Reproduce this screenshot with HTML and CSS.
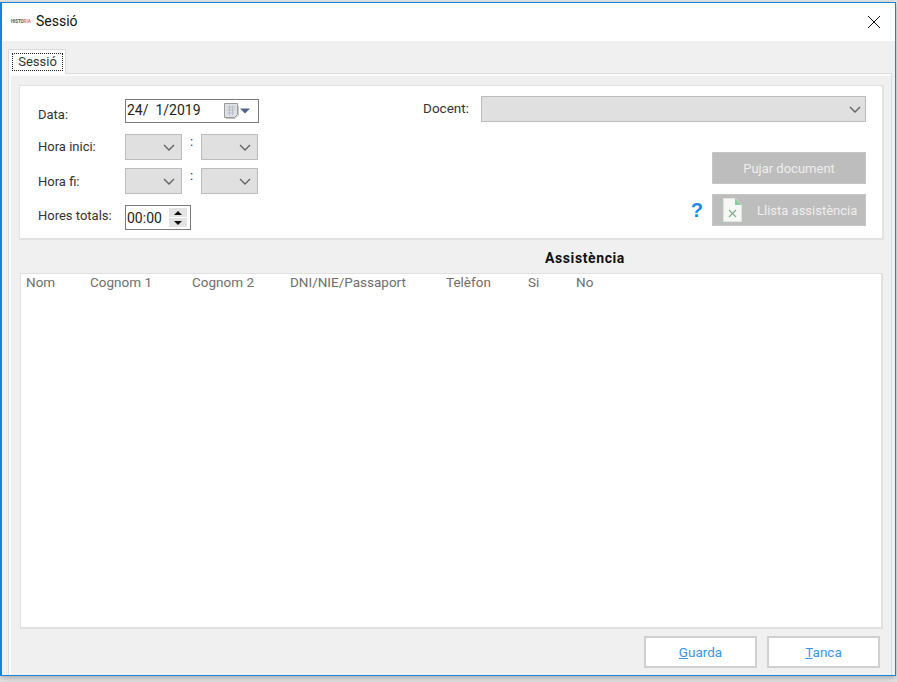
FILE: index.html
```html
<!DOCTYPE html>
<html lang="ca">
<head>
<meta charset="utf-8">
<title>Sessió</title>
<link rel="stylesheet" href="styles.css">
</head>
<body>
<div class="window">
  <header class="titlebar">
    <span class="logo"><span class="logo-dark">HISTO</span><span class="logo-red">RIA</span></span>
    <span class="title">Sessió</span>
    <svg class="close" width="14" height="14" viewBox="0 0 14 14"><path d="M1 1L13 13M13 1L1 13" stroke="#111" stroke-width="1" fill="none"/></svg>
  </header>
  <main class="content">
    <div class="tabs"><div class="tab"><span class="tab-focus">Sessió</span></div></div>
    <div class="tabpage">
      <section class="panel">
        <div class="left">
          <div class="row row-date">
            <label class="lbl lbl-date">Data:</label>
            <div class="date">
              <span class="date-text">24/&nbsp; 1/2019</span>
              <svg class="cal" width="15" height="16" viewBox="0 0 15 16">
                <path d="M0.5 0.5H13.5V11.5L10.5 14.5H0.5Z" fill="#dde0e6" stroke="#9a9a9a"/>
                <path d="M3 4H11M3 7H11M3 10H10M5.5 2.5V12.5M8.5 2.5V12.5" stroke="#b9bdc6" fill="none"/>
                <path d="M14.5 3V12L11 15.5H2" stroke="#c4c4c4" fill="none"/>
              </svg>
              <svg class="dd" width="10" height="6" viewBox="0 0 10 6"><path d="M0 0.5H10L5 5.5Z" fill="#4f6484"/></svg>
            </div>
          </div>
          <div class="row row-start">
            <label class="lbl lbl-start">Hora inici:</label>
            <div class="combo combo-s"><svg class="chev" width="12" height="7" viewBox="0 0 12 7"><path d="M1 1L6 6L11 1" stroke="#606060" stroke-width="1.3" fill="none"/></svg></div>
            <span class="colon">:</span>
            <div class="combo combo-s"><svg class="chev" width="12" height="7" viewBox="0 0 12 7"><path d="M1 1L6 6L11 1" stroke="#606060" stroke-width="1.3" fill="none"/></svg></div>
          </div>
          <div class="row row-end">
            <label class="lbl">Hora fi:</label>
            <div class="combo combo-s"><svg class="chev" width="12" height="7" viewBox="0 0 12 7"><path d="M1 1L6 6L11 1" stroke="#606060" stroke-width="1.3" fill="none"/></svg></div>
            <span class="colon">:</span>
            <div class="combo combo-s"><svg class="chev" width="12" height="7" viewBox="0 0 12 7"><path d="M1 1L6 6L11 1" stroke="#606060" stroke-width="1.3" fill="none"/></svg></div>
          </div>
          <div class="row row-total">
            <label class="lbl lbl-total">Hores totals:</label>
            <div class="spin">
              <span class="spin-text">00:00</span>
              <div class="spin-btns">
                <span class="spin-btn"><svg width="8" height="4" viewBox="0 0 8 4"><path d="M4 0L8 4H0Z" fill="#111"/></svg></span>
                <span class="spin-btn"><svg width="8" height="4" viewBox="0 0 8 4"><path d="M0 0H8L4 4Z" fill="#111"/></svg></span>
              </div>
            </div>
          </div>
        </div>
        <div class="right">
          <div class="docent">
            <label class="lbl-docent">Docent:</label>
            <div class="combo combo-l"><svg class="chev" width="12" height="7" viewBox="0 0 12 7"><path d="M1 1L6 6L11 1" stroke="#606060" stroke-width="1.3" fill="none"/></svg></div>
          </div>
          <div class="btn-dis btn-upload">Pujar document</div>
          <div class="list-row">
            <span class="help">?</span>
            <div class="btn-dis btn-list">
              <svg class="xls" width="19" height="24" viewBox="0 0 19 24">
                <path d="M0.5 0.5H12L18.5 7V23.5H0.5Z" fill="#f6f8f6" stroke="#dfe6df"/>
                <path d="M12 0.5L18.5 7H12Z" fill="#8fcb9b"/>
                <path d="M6 12L13 19M13 12L6 19" stroke="#7fae8d" stroke-width="1.2" fill="none"/>
              </svg>
              <span>Llista assistència</span>
            </div>
          </div>
        </div>
      </section>
      <h2 class="heading">Assistència</h2>
      <section class="list">
        <div class="cols">
          <span>Nom</span>
          <span>Cognom 1</span>
          <span>Cognom 2</span>
          <span>DNI/NIE/Passaport</span>
          <span>Telèfon</span>
          <span>Si</span>
          <span>No</span>
        </div>
      </section>
      <footer class="actions">
        <button class="btn"><u>G</u>uarda</button>
        <button class="btn"><u>T</u>anca</button>
      </footer>
    </div>
  </main>
</div>
</body>
</html>
```
FILE: styles.css
```css
* { box-sizing: border-box; }
html, body { margin: 0; padding: 0; }
body {
  width: 897px;
  height: 682px;
  overflow: hidden;
  background: #e9e9e9;
  font-family: Roboto, "Liberation Sans", sans-serif;
  font-size: 13px;
  color: #333;
}
.window {
  margin-top: 2px;
  width: 896px;
  height: 674px;
  border: 1px solid #1883d7;
  border-left-width: 2px;
  display: flex;
  flex-direction: column;
  box-shadow: 0 2px 7px rgba(0, 0, 0, .3);
  background: #f0f0f0;
}
.titlebar {
  height: 38px;
  flex: none;
  background: #fff;
  display: flex;
  align-items: center;
  padding: 0 14px 2px 9px;
}
.logo { font-size: 4.5px; font-weight: 700; width: 25px; letter-spacing: -.1px; }
.logo-dark { color: #555; }
.logo-red { color: #d9727c; }
.title { font-size: 14px; color: #111; }
.close { margin-left: auto; margin-top: 2px; }
.content { flex: 1; display: flex; flex-direction: column; padding: 8px 0 0 6px; min-height: 0; }
.tabs { height: 24px; flex: none; display: flex; }
.tab {
  width: 58px;
  height: 25px;
  background: #fff;
  border: 1px solid #dcdcdc;
  border-bottom: none;
  padding: 3px 2px 2px 3px;
  position: relative;
  z-index: 1;
}
.tab-focus {
  display: block;
  height: 18px;
  border: 1px dotted #222;
  font-size: 13px;
  line-height: 15px;
  text-align: center;
  color: #333;
}
.tabpage {
  width: 884px;
  flex: 1;
  border: 1px solid #dcdcdc;
  border-bottom: none;
  box-shadow: inset 2px 2px 0 #fbfbfb;
  padding: 11px 8px 0 10px;
}
.panel {
  width: 865px;
  height: 155px;
  background: #fff;
  border: solid #e3e3e3;
  border-width: 1px 2px 2px 1px;
  display: flex;
  justify-content: space-between;
  padding: 13px 16px 0 18px;
}
.left { display: flex; flex-direction: column; }
.row { display: flex; align-items: center; }
.row-start { margin-top: 11px; }
.row-end { margin-top: 8px; }
.row-total { margin-top: 11px; }
.lbl { width: 87px; flex: none; font-size: 13px; color: #333; }
.lbl-date { padding-top: 6px; }
.lbl-start { padding-bottom: 2px; }
.lbl-total { padding-bottom: 4px; }
.date {
  width: 134px;
  height: 24px;
  border: 1px solid #7a7a7a;
  display: flex;
  align-items: center;
  padding: 0 8px 0 1px;
  background: #fff;
}
.date-text { font-size: 14px; color: #222; flex: 1; padding-bottom: 2px; }
.cal { flex: none; margin-right: 1px; }
.dd { flex: none; }
.combo {
  background: #e0e0e0;
  border: 1px solid #bcbcbc;
  display: flex;
  align-items: center;
  justify-content: flex-end;
}
.combo-s { width: 57px; height: 26px; padding-right: 6px; }
.combo-l { width: 385px; height: 26px; padding-right: 4px; }
.colon { width: 19px; text-align: center; font-size: 13px; line-height: 13px; align-self: flex-start; padding-top: 1px; }
.spin {
  width: 66px;
  height: 25px;
  border: 1px solid #7a7a7a;
  display: flex;
  align-items: center;
  padding: 0 3px 0 1px;
  background: #fff;
}
.spin-text { font-size: 14px; color: #222; flex: 1; }
.spin-btns { display: flex; flex-direction: column; gap: 1px; width: 18px; }
.spin-btn { height: 9px; background: #e3e3e3; display: flex; align-items: center; justify-content: center; }
.right { display: flex; flex-direction: column; align-items: flex-end; margin-top: -3px; }
.docent { display: flex; align-items: center; height: 26px; }
.lbl-docent { margin-right: 12px; font-size: 13.5px; color: #333; padding-bottom: 2px; }
.btn-dis {
  width: 154px;
  height: 32px;
  background: #bdbdbd;
  border: 1px solid #c6c6c6;
  color: #eee;
  font-size: 13px;
  display: flex;
  align-items: center;
}
.btn-upload { margin-top: 30px; justify-content: center; }
.list-row { margin-top: 10px; display: flex; align-items: center; }
.help { color: #1e88e5; font-size: 20px; font-weight: 700; margin-right: 9px; line-height: 32px; font-family: "Liberation Sans", sans-serif; }
.btn-list { padding-left: 10px; justify-content: flex-start; }
.xls { flex: none; margin-right: 15px; }
.heading {
  margin: 0;
  height: 33px;
  padding: 10px 0 0 526px;
  font-size: 14px;
  line-height: 16px;
  font-weight: 700;
  letter-spacing: .6px;
  color: #111;
}
.list {
  width: 863px;
  height: 356px;
  margin-left: 1px;
  background: #fff;
  border: solid #e0e0e0;
  border-width: 1px 2px 2px 1px;
}
.cols {
  height: 18px;
  display: grid;
  grid-template-columns: 64px 102px 98px 156px 82px 48px 1fr;
  padding-left: 5px;
  color: #6e6e6e;
  font-size: 13.5px;
  line-height: 16px;
}
.actions {
  display: flex;
  gap: 10px;
  justify-content: flex-end;
  padding: 7px 3px 0 0;
}
.btn {
  width: 113px;
  height: 32px;
  background: #fff;
  border: 2px solid #d0d0d0;
  color: #3a96ee;
  font: 13.5px Roboto, "Liberation Sans", sans-serif;
  padding: 0;
}
```
